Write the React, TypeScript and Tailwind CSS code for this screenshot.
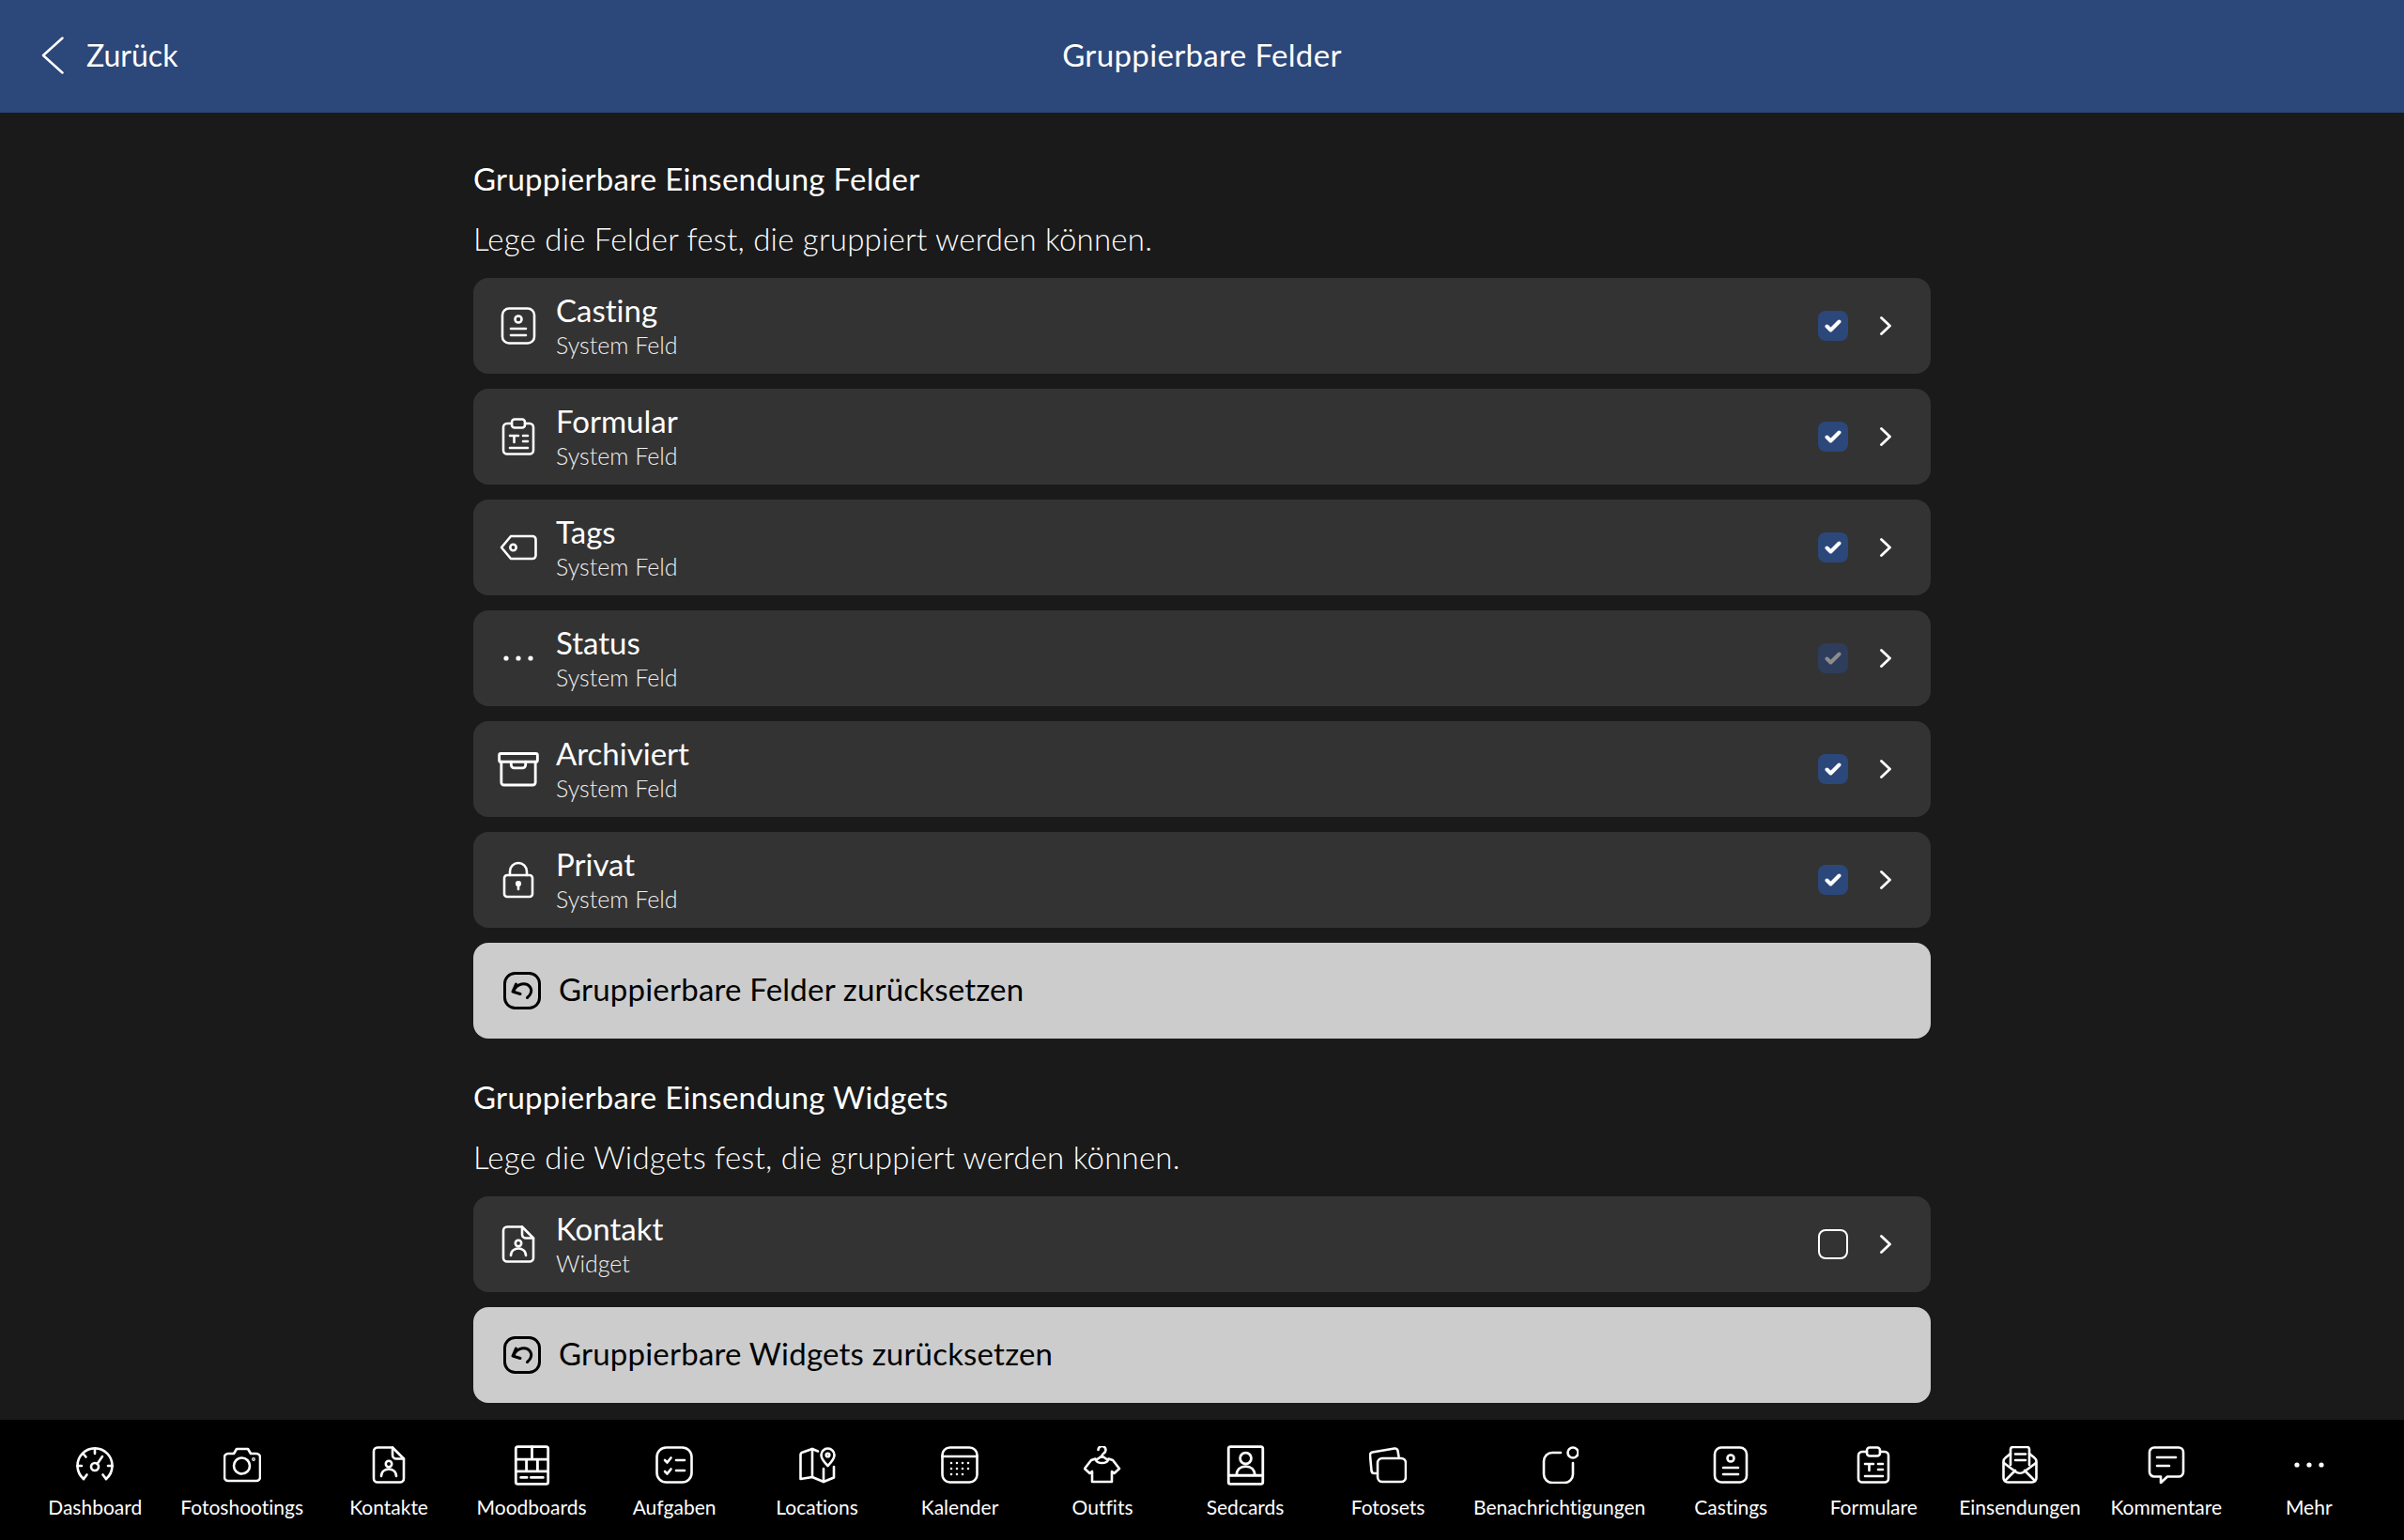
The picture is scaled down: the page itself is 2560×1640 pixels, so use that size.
import type { ReactNode } from "react";

const font = "font-[Lato,'Noto_Sans',sans-serif] [font-variant-ligatures:none]";

// all line icons share one 40x40 box
function Ico({ children, size = 40 }: { children: ReactNode; size?: number }) {
  return (
    <svg
      width={size}
      height={size}
      viewBox="0 0 40 40"
      fill="none"
      stroke="currentColor"
      strokeWidth={2.6}
      strokeLinecap="round"
      strokeLinejoin="round"
    >
      {children}
    </svg>
  );
}

const Dashboard = () => (
  <Ico>
    <path d="M8 35A18.500 18.500 0 1 1 32 35" />
    <path d="M8 35l3.500-4.500M32 35l-3.500-4.500" />
    <path d="M20 3v5M7.500 8l3 3.500M1.500 21H6M38.500 21H34" />
    <circle cx="20" cy="22" r="4" />
    <path d="M22.500 19l5.500-8" />
  </Ico>
);
const Camera = () => (
  <Ico>
    <path d="M5 8h6l3-5h12l3 5h6a4 4 0 0 1 4 4v21a4 4 0 0 1-4 4H5a4 4 0 0 1-4-4V12a4 4 0 0 1 4-4z" />
    <circle cx="19.500" cy="21" r="8.500" />
    <circle cx="32" cy="14" r="0.6" />
  </Ico>
);
const DocPerson = ({ size = 40 }: { size?: number }) => (
  <Ico size={size}>
    <path d="M8 1.500h16l12 12v21a4 4 0 0 1-4 4H8a4 4 0 0 1-4-4v-29a4 4 0 0 1 4-4z" />
    <path d="M24 1.500v8a4 4 0 0 0 4 4h8" />
    <circle cx="20" cy="19" r="3.200" />
    <path d="M12 32c0-5 4-7.500 8-7.500s8 2.500 8 7.500" />
  </Ico>
);
const Moodboards = () => (
  <Ico size={43}>
    <rect x="4" y="1.500" width="32" height="37" rx="2" />
    <path d="M4 14h32M20 1.500V14M4 26h32M14.500 14v12M25.500 14v12M9 32h6M19 32h12" />
  </Ico>
);
const Tasks = () => (
  <Ico>
    <rect x="1.500" y="1.500" width="37" height="37" rx="10" />
    <path d="M10 15l2.500 2.500 4-5M10 27l2.500 2.500 4-5" />
    <path d="M22 15h9M22 26h9" />
  </Ico>
);
const MapPin = () => (
  <Ico>
    <path d="M15 3L5 6.500a3 3 0 0 0-2.500 3V35L15 33l12 5 11-4.500V22" />
    <path d="M15 3v30M27 24v14M15 3l6 2.500" />
    <path d="M31.500 21c-4-4-7-7.500-7-11.500a7 7 0 0 1 14 0c0 4-3 7.500-7 11.500z" />
    <circle cx="31.500" cy="9.500" r="1.800" />
  </Ico>
);
const Calendar = () => (
  <Ico>
    <rect x="1.500" y="1.500" width="37" height="37" rx="8" />
    <path d="M1.500 11h37" />
    <path d="M11 18h.01M17 18h.01M23 18h.01M29 18h.01M11 24h.01M17 24h.01M23 24h.01M29 24h.01M11 30h.01M17 30h.01M23 30h.01" />
  </Ico>
);
const Outfit = () => (
  <Ico>
    <path d="M15.500 4A4 4 0 1 1 21.500 7.500C20 8.500 19.500 9 19.500 10.500" />
    <path d="M19.500 10.500L13 15C15 19 24 19 26 15Z" />
    <path d="M12.500 13.500L8 15 1 24l5.500 5L9 27v11h21V27l2.500 2 5.500-5-7-9-4.500-1.500" />
  </Ico>
);
const Sedcard = () => (
  <Ico size={43}>
    <rect x="3" y="1.500" width="34" height="37" rx="2" />
    <circle cx="20" cy="13" r="5.500" />
    <path d="M11 30c0-6 4-9 9-9s9 3 9 9M3 30h34" />
  </Ico>
);
const Fotosets = () => (
  <Ico>
    <path d="M7 29H5.500a3 3 0 0 1-3-2.500L1 10a3 3 0 0 1 2.500-3.500L27 2.500a3 3 0 0 1 3.500 2.500l1 6" />
    <rect x="9" y="13" width="30" height="25" rx="5" />
  </Ico>
);
const Bell = () => (
  <Ico>
    <path d="M21 7H12a9 9 0 0 0-9 9v14a9 9 0 0 0 9 9h13a9 9 0 0 0 9-9V18" />
    <circle cx="34" cy="7" r="5.500" />
  </Ico>
);
const IdCard = ({ size = 40 }: { size?: number }) => (
  <Ico size={size}>
    <rect x="3" y="1.500" width="34" height="37" rx="7" />
    <circle cx="20" cy="13" r="3.500" />
    <path d="M12 23h16M12 30h16" />
  </Ico>
);
const Clipboard = ({ size = 40 }: { size?: number }) => (
  <Ico size={size}>
    <path d="M13 6H8a4 4 0 0 0-4 4v24.500a4 4 0 0 0 4 4h24a4 4 0 0 0 4-4V10a4 4 0 0 0-4-4h-5" />
    <rect x="13" y="1.500" width="14" height="9" rx="3" />
    <path d="M11 19h9M15.500 19v7M25 19h5M25 25h5M11 32h19" />
  </Ico>
);
const Envelope = () => (
  <Ico>
    <path d="M10 20V3.500a2.500 2.500 0 0 1 2.500-2.500h15A2.500 2.500 0 0 1 30 3.500V20" />
    <path d="M15 8.500h11M15 15h11" />
    <path d="M10 8l-5.500 4.500a5 5 0 0 0-2 4V34a4.500 4.500 0 0 0 4.500 4.500h26a4.500 4.500 0 0 0 4.500-4.500V16.500a5 5 0 0 0-2-4L30 8" />
    <path d="M3 18l12 9a8 8 0 0 0 10 0l12-9M4 37l11-11M36 37L25 26" />
  </Ico>
);
const Comment = () => (
  <Ico>
    <path d="M7 1.500h26a5 5 0 0 1 5 5v21a5 5 0 0 1-5 5H21l-7 6.500v-6.500H7a5 5 0 0 1-5-5v-21a5 5 0 0 1 5-5z" />
    <path d="M10 12h20M10 21h13" />
  </Ico>
);
const Dots = () => (
  <Ico>
    <g fill="currentColor" stroke="none">
      <circle cx="7" cy="20" r="2.600" />
      <circle cx="20" cy="20" r="2.600" />
      <circle cx="33" cy="20" r="2.600" />
    </g>
  </Ico>
);
const Tag = () => (
  <Ico>
    <path d="M12 8h23a3.500 3.500 0 0 1 3.500 3.500v17a3.500 3.500 0 0 1-3.500 3.500H12L2 20z" />
    <circle cx="14.500" cy="20" r="3.200" />
  </Ico>
);
const Archive = () => (
  <Ico size={44}>
    <rect x="1.500" y="5" width="37" height="8" rx="1.500" />
    <path d="M3.500 13v20a2.500 2.500 0 0 0 2.500 2.500h28a2.500 2.500 0 0 0 2.500-2.500V13" />
    <path d="M13 13v3a3 3 0 0 0 3 3h8a3 3 0 0 0 3-3v-3" />
  </Ico>
);
const Lock = () => (
  <Ico>
    <rect x="5" y="15" width="30" height="23" rx="3" />
    <path d="M11 15v-4a9 9 0 0 1 18 0v4" />
    <circle cx="20" cy="24" r="1.800" fill="currentColor" />
    <path d="M20 25v5" />
  </Ico>
);
const Reset = () => (
  <Ico>
    <rect x="1.500" y="1.500" width="37" height="37" rx="11" strokeWidth={3} />
    <g strokeWidth={3}>
      <path d="M13.500 13L10 21l8 2.500" />
      <path d="M11 20C15 12 24 11 28 15.500 31 19 30 24 25.500 27.500" />
    </g>
  </Ico>
);

function CheckBox({ state }: { state: "on" | "off" | "dim" }) {
  if (state === "off") {
    return <div className="h-8 w-8 rounded-lg border-2 border-white" />;
  }
  const dim = state === "dim";
  return (
    <div
      className={`flex h-8 w-8 items-center justify-center rounded-lg ${
        dim ? "bg-[#2e3d5b]" : "bg-[#2c4779]"
      }`}
    >
      <svg width="18" height="14" viewBox="0 0 18 14" fill="none">
        <path
          d="M2.500 7.500l4 4 9-9"
          stroke={dim ? "#8c8c8c" : "#ffffff"}
          strokeWidth={4}
          strokeLinecap="round"
          strokeLinejoin="round"
        />
      </svg>
    </div>
  );
}

function Row({
  icon,
  title,
  sub,
  state,
}: {
  icon: ReactNode;
  title: string;
  sub: string;
  state: "on" | "off" | "dim";
}) {
  return (
    <div className="flex h-[102px] items-center rounded-2xl bg-[#333333] pl-5 pr-[42px]">
      <div className="flex w-14 justify-center text-white">{icon}</div>
      <div className="ml-3 flex-1 pb-[1px]">
        <div className="text-[33px] leading-[40px] text-white">{title}</div>
        <div className="mt-[2px] text-[25px] leading-[31px] font-light text-[#f0f0f0]">{sub}</div>
      </div>
      <CheckBox state={state} />
      <svg className="ml-[34px]" width="12" height="20" viewBox="0 0 12 20" fill="none">
        <path
          d="M1.500 1.500L10.500 10l-9 8.500"
          stroke="#ffffff"
          strokeWidth={2.800}
          strokeLinecap="round"
          strokeLinejoin="round"
        />
      </svg>
    </div>
  );
}

function ResetButton({ label }: { label: string }) {
  return (
    <div className="flex h-[102px] items-center gap-[19px] rounded-2xl bg-[#cccccc] pl-[32px] text-black">
      <Reset />
      <span className="pb-[3px] text-[33px] tracking-[0.2px]">{label}</span>
    </div>
  );
}

const tabs: { label: string; icon: ReactNode }[] = [
  { label: "Dashboard", icon: <Dashboard /> },
  { label: "Fotoshootings", icon: <Camera /> },
  { label: "Kontakte", icon: <DocPerson /> },
  { label: "Moodboards", icon: <Moodboards /> },
  { label: "Aufgaben", icon: <Tasks /> },
  { label: "Locations", icon: <MapPin /> },
  { label: "Kalender", icon: <Calendar /> },
  { label: "Outfits", icon: <Outfit /> },
  { label: "Sedcards", icon: <Sedcard /> },
  { label: "Fotosets", icon: <Fotosets /> },
  { label: "Benachrichtigungen", icon: <Bell /> },
  { label: "Castings", icon: <IdCard /> },
  { label: "Formulare", icon: <Clipboard /> },
  { label: "Einsendungen", icon: <Envelope /> },
  { label: "Kommentare", icon: <Comment /> },
  { label: "Mehr", icon: <Dots /> },
];

export default function App() {
  return (
    <div className={`flex h-[1640px] w-[2560px] flex-col overflow-hidden bg-[#1a1a1a] ${font}`}>
      {/* header */}
      <div className="grid h-[120px] shrink-0 grid-cols-3 items-center bg-[#2c4779] px-[44px] pb-[2px] text-white">
        <div className="flex items-center gap-[24px]">
          <svg width="24" height="40" viewBox="0 0 24 40" fill="none">
            <path
              d="M22.500 1.500L2 20l20.500 18.500"
              stroke="#ffffff"
              strokeWidth={2.500}
              strokeLinecap="round"
              strokeLinejoin="round"
            />
          </svg>
          <span className="text-[32px]">Zurück</span>
        </div>
        <div className="text-center text-[33px] tracking-[0.35px] whitespace-nowrap">Gruppierbare Felder</div>
      </div>

      {/* content */}
      <div className="flex-1 px-[504px]">
        <h2 className="mt-[47px] text-[33px] leading-[46px] tracking-[0.27px] text-white">
          Gruppierbare Einsendung Felder
        </h2>
        <p className="mt-[18px] mb-[19px] text-[33px] leading-[46px] font-light tracking-[0.23px] text-white">
          Lege die Felder fest, die gruppiert werden können.
        </p>
        <div className="flex flex-col gap-4">
          <Row icon={<IdCard />} title="Casting" sub="System Feld" state="on" />
          <Row icon={<Clipboard />} title="Formular" sub="System Feld" state="on" />
          <Row icon={<Tag />} title="Tags" sub="System Feld" state="on" />
          <Row icon={<Dots />} title="Status" sub="System Feld" state="dim" />
          <Row icon={<Archive />} title="Archiviert" sub="System Feld" state="on" />
          <Row icon={<Lock />} title="Privat" sub="System Feld" state="on" />
          <ResetButton label="Gruppierbare Felder zurücksetzen" />
        </div>

        <h2 className="mt-[39px] text-[33px] leading-[46px] tracking-[0.27px] text-white">
          Gruppierbare Einsendung Widgets
        </h2>
        <p className="mt-[18px] mb-[19px] text-[33px] leading-[46px] font-light tracking-[0.23px] text-white">
          Lege die Widgets fest, die gruppiert werden können.
        </p>
        <div className="flex flex-col gap-4">
          <Row icon={<DocPerson />} title="Kontakt" sub="Widget" state="off" />
          <ResetButton label="Gruppierbare Widgets zurücksetzen" />
        </div>
      </div>

      {/* tab bar */}
      <div className="flex h-[128px] shrink-0 justify-center bg-black pt-[26px] text-white">
        {tabs.map((t) => (
          <div key={t.label} className="flex min-w-[152px] flex-col items-center px-[15px]">
            <div className="flex h-[44px] items-center">{t.icon}</div>
            <div className="mt-[10px] text-[21px] leading-[26px] whitespace-nowrap">{t.label}</div>
          </div>
        ))}
      </div>
    </div>
  );
}
